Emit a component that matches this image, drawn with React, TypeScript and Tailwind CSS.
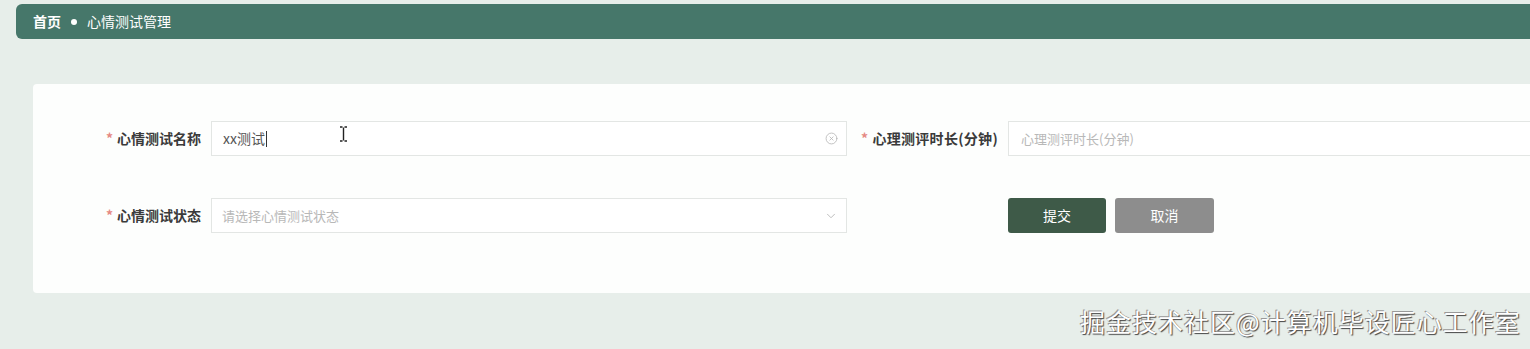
import { ChevronDown, CircleX } from 'lucide-react';

const font = { fontFamily: '"Noto Sans CJK SC", "Liberation Sans", sans-serif' };

function Label({ text, className }: { text: string; className?: string }) {
  return (
    <label className={`flex shrink-0 items-center justify-end pr-[10px] text-[14px] font-bold text-[#3a3a3a] ${className ?? ''}`}>
      <span className="mr-[4px] text-[#e58a84]">*</span>
      {text}
    </label>
  );
}

export default function App() {
  return (
    <div className="relative h-[349px] w-full overflow-hidden bg-[#e7eeea]" style={font}>
      {/* breadcrumb */}
      <div className="pt-[4px] pl-[16px]">
        <div className="flex h-[35px] w-[1530px] items-center rounded-[6px] bg-[#46776a] pl-[17px] text-[14px] font-bold text-white">
          <span>首页</span>
          <span className="mx-[10px] h-[6px] w-[6px] rounded-full bg-white" />
          <span className="font-normal">心情测试管理</span>
        </div>
      </div>

      {/* form card */}
      <div className="ml-[33px] mt-[45px] h-[209px] w-[1530px] rounded-l-[4px] bg-[#fdfefd] pt-[37px]">
        <div className="flex items-center">
          <Label text="心情测试名称" className="w-[178px]" />
          <div className="relative flex h-[35px] w-[636px] shrink-0 items-center border border-[#e3e6e4] bg-white pl-[11px] text-[14px] text-[#555]">
            xx测试<span className="ml-[1px] h-[16px] w-px bg-[#333]" />
            <CircleX className="absolute right-[8px] h-[13px] w-[13px] text-[#b5b5b5]" strokeWidth={1.5} />
          </div>
          <Label text="心理测评时长(分钟)" className="w-[161px] tracking-[0.3px]" />
          <div className="flex h-[35px] min-w-0 flex-1 items-center border border-[#e3e6e4] bg-white pl-[12px] text-[13px] text-[#b8b8b8]">
            心理测评时长(分钟)
          </div>
        </div>

        <div className="mt-[42px] flex items-center">
          <Label text="心情测试状态" className="w-[178px]" />
          <div className="relative flex h-[35px] w-[636px] shrink-0 items-center border border-[#e3e6e4] bg-white pl-[10px] text-[13px] text-[#b8b8b8]">
            请选择心情测试状态
            <ChevronDown className="absolute right-[8px] h-[14px] w-[14px] text-[#b5b5b5]" strokeWidth={1.5} />
          </div>
          <div className="ml-[161px] flex gap-[9px]">
            <button className="h-[35px] w-[98px] rounded-[3px] bg-[#3e5a48] text-[14px] text-white">提交</button>
            <button className="h-[35px] w-[99px] rounded-[3px] bg-[#8d8d8d] text-[14px] text-white">取消</button>
          </div>
        </div>
      </div>

      {/* text cursor */}
      <svg className="absolute left-[339px] top-[126px]" width="9" height="16" viewBox="0 0 9 16">
        <path d="M1 1h2.5M5.5 1H8M4.5 1.5v13M1 15h2.5M5.5 15H8" stroke="#222" strokeWidth="1.4" fill="none" />
      </svg>

      {/* watermark */}
      <div
        className="absolute left-[1080px] top-[303px] text-[25px] tracking-[1px] text-white"
        style={{ textShadow: '1px 1px 1px #444, -1px -1px 0 #999' }}
      >
        掘金技术社区@计算机毕设匠心工作室
      </div>
    </div>
  );
}
